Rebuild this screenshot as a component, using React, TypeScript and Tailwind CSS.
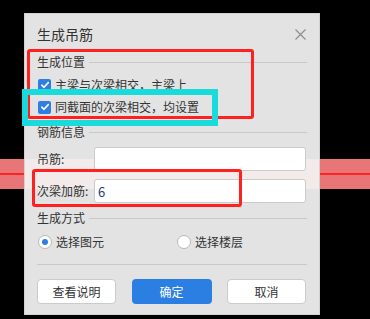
import React from "react";

const font = { fontFamily: '"Noto Sans CJK SC", "Noto Sans", sans-serif' };

function SectionTitle({ label }: { label: string }) {
  return (
    <div className="flex items-center gap-[4px] h-[16px]">
      <span className="text-[12px] leading-none text-[#333]">{label}</span>
      <div className="flex-1 h-px bg-[#c9c9c9]" />
    </div>
  );
}

function CheckRow({ label }: { label: string }) {
  return (
    <div className="flex items-center gap-[4px] h-[22px] pl-px">
      <span className="w-[13px] h-[13px] rounded-[2px] bg-[#2f7fe2] flex items-center justify-center">
        <svg width="10" height="10" viewBox="0 0 10 10">
          <path d="M1.8 5.2 L4 7.3 L8.3 2.6" stroke="#fff" strokeWidth="1.6" fill="none" strokeLinecap="round" strokeLinejoin="round" />
        </svg>
      </span>
      <span className="text-[12px] leading-none text-[#333]">{label}</span>
    </div>
  );
}

function FieldRow({ label, value }: { label: string; value?: string }) {
  return (
    <div className="flex items-center h-[24px]">
      <span className="w-[57px] text-[12px] leading-none text-[#333]">{label}</span>
      <div className="flex-1 h-full bg-white border border-[#cbcbcb] rounded-[3px] flex items-center px-[3px] mr-px">
        <span className="text-[13px] leading-none text-[#1f3f7a]">{value}</span>
      </div>
    </div>
  );
}

function Radio({ label, checked }: { label: string; checked?: boolean }) {
  return (
    <div className="flex items-center gap-[4px]">
      <span className="w-[14px] h-[14px] rounded-full bg-white border border-[#b9b9b9] flex items-center justify-center">
        {checked && <span className="w-[6px] h-[6px] rounded-full bg-[#2f7fe2]" />}
      </span>
      <span className="text-[12px] leading-none text-[#333]">{label}</span>
    </div>
  );
}

export default function App() {
  return (
    <div className="relative w-[370px] h-[319px] bg-black overflow-hidden" style={font}>
      {/* red band behind the dialog */}
      <div className="absolute left-0 right-0 top-[159px] h-[30px] bg-[#e87676]">
        <div className="mt-[14px] h-[2px] bg-[#ff2424]" />
      </div>

      <div className="relative ml-[24px] mt-[13px] w-[296px] h-[302px] bg-[#e3e3e3] border border-[#d2d2d2] px-[12px]">
        <div className="absolute left-0 right-0 top-[145px] h-[30px] bg-[#f3eaea]" />

        <div className="relative">
          <div className="flex items-center justify-between h-[40px]">
            <span className="text-[14px] leading-none text-[#333]">生成吊筋</span>
            <svg width="11" height="11" viewBox="0 0 11 11" className="mr-[1px]">
              <path d="M0.5 0.5 L10.5 10.5 M10.5 0.5 L0.5 10.5" stroke="#8c8c8c" strokeWidth="1.1" />
            </svg>
          </div>

          <SectionTitle label="生成位置" />
          <div className="mt-[4px]">
            <CheckRow label="主梁与次梁相交，主梁上" />
            <CheckRow label="同截面的次梁相交，均设置" />
          </div>

          <div className="mt-[6px]">
            <SectionTitle label="钢筋信息" />
          </div>
          <div className="mt-[7px]">
            <FieldRow label="吊筋:" />
          </div>
          <div className="mt-[8px]">
            <FieldRow label="次梁加筋:" value="6" />
          </div>

          <div className="mt-[7px]">
            <SectionTitle label="生成方式" />
          </div>
          <div className="mt-[5px] h-[22px] flex items-center pl-px">
            <div className="w-[139px]">
              <Radio label="选择图元" checked />
            </div>
            <Radio label="选择楼层" />
          </div>

          <div className="mt-[11px] h-px bg-[#c9c9c9]" />

          <div className="mt-[14px] flex justify-between pr-px">
            <button className="w-[79px] h-[25px] bg-white border border-[#cbcbcb] rounded-[4px] text-[12px] text-[#333]">
              查看说明
            </button>
            <button className="w-[80px] h-[25px] bg-[#2b7fe2] rounded-[4px] text-[12px] text-white">
              确定
            </button>
            <button className="w-[79px] h-[25px] bg-white border border-[#cbcbcb] rounded-[4px] text-[12px] text-[#333]">
              取消
            </button>
          </div>
        </div>
      </div>

      {/* annotation boxes */}
      <div className="absolute left-[27px] top-[49px] w-[227px] h-[70px] border-[3px] border-[#ff2020] rounded-[3px]" />
      <div className="absolute left-[22px] top-[89px] w-[196px] h-[37px] border-[6px] border-[#1adbdc]" />
      <div className="absolute left-[32px] top-[169px] w-[210px] h-[38px] border-[3px] border-[#ff2020] rounded-[3px]" />
    </div>
  );
}
